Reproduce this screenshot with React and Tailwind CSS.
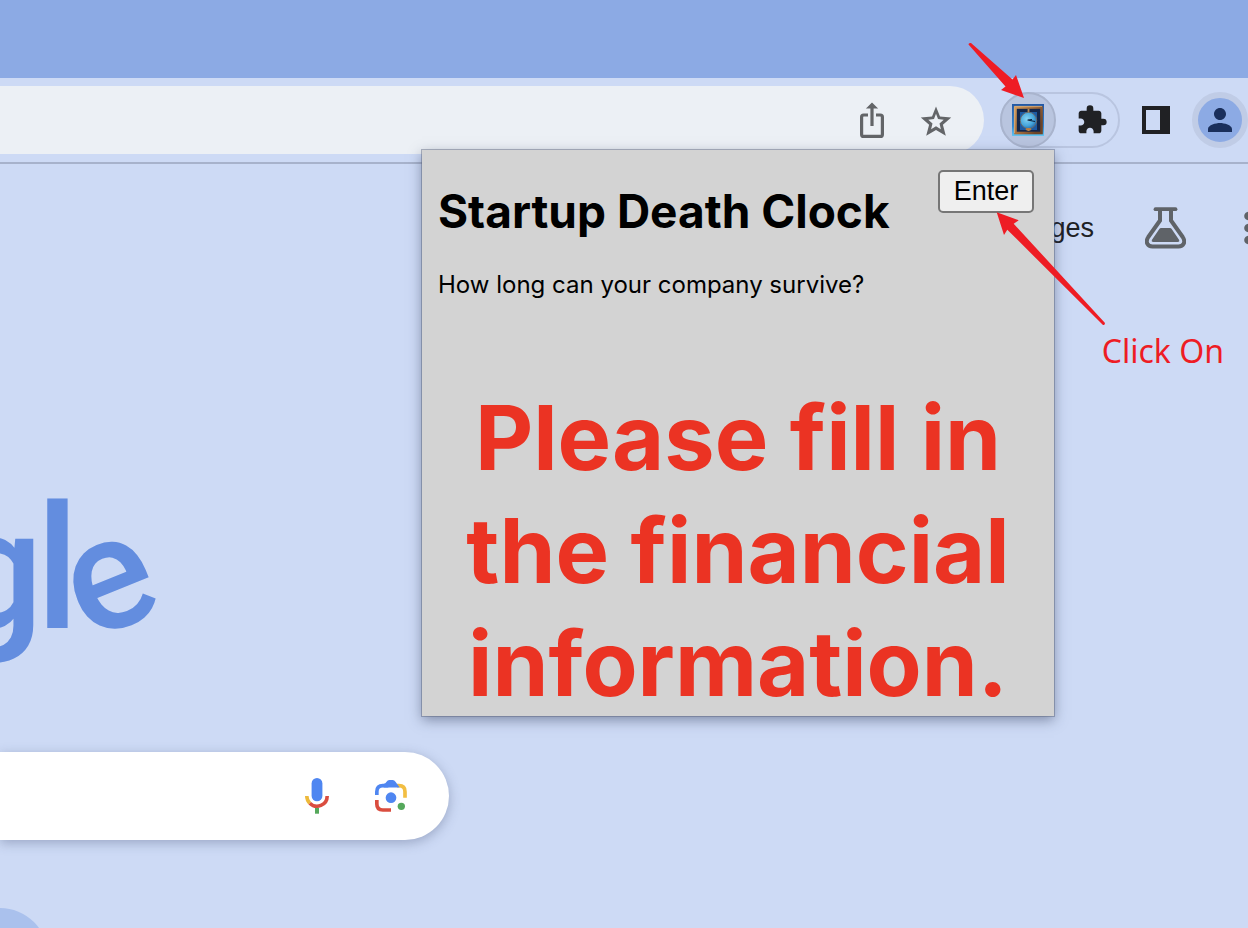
import React from "react";
import { MdExtension, MdPerson } from "react-icons/md";

function ShareIcon() {
  return (
    <svg className="h-9 w-7" viewBox="0 0 28 36" fill="none" stroke="#636568" strokeWidth="3.2" aria-hidden="true">
      <path d="M10 13H5.6a2 2 0 0 0-2 2v17.400a2 2 0 0 0 2 2h16.800a2 2 0 0 0 2-2V15a2 2 0 0 0-2-2H18" />
      <path d="M14 24V3" />
      <path d="M9.800 5.800L14 1.600l4.200 4.200z" fill="#636568" strokeWidth="1.600" />
    </svg>
  );
}

function StarIcon() {
  return (
    <svg className="size-9" viewBox="0 0 36 36" aria-hidden="true">
      <path
        d="M18 4.500L22 14.400L33.200 15.600L24.900 22.700L27.800 33.800L18 28L8.200 33.800L11.100 22.700L2.800 15.600L14 14.400Z M18 11.800L16 17L10.300 17.800L14.500 21.400L13.100 27.200L18 24.200L22.900 27.200L21.500 21.400L25.700 17.800L20 17Z"
        fill="#636568"
        fillRule="evenodd"
      />
    </svg>
  );
}

function ClockFrameIcon() {
  return (
    <svg className="size-8" viewBox="0 0 32 32" aria-hidden="true">
      <defs>
        <linearGradient id="sky" x1="0" y1="0" x2="0" y2="1">
          <stop offset="0" stopColor="#2458a4" />
          <stop offset="0.7" stopColor="#2f86d6" />
          <stop offset="1" stopColor="#63c4f0" />
        </linearGradient>
        <linearGradient id="wood" x1="0" y1="0" x2="1" y2="0.6">
          <stop offset="0" stopColor="#d29a5c" />
          <stop offset="0.5" stopColor="#a8703e" />
          <stop offset="1" stopColor="#6e4426" />
        </linearGradient>
        <radialGradient id="dial" cx="0.4" cy="0.4" r="0.7">
          <stop offset="0" stopColor="#86d3f2" />
          <stop offset="0.6" stopColor="#45a5dc" />
          <stop offset="1" stopColor="#1c5c9e" />
        </radialGradient>
      </defs>
      <rect width="32" height="32" fill="url(#sky)" />
      <rect x="3.500" y="3.500" width="26" height="25.500" fill="#14264a" stroke="url(#wood)" strokeWidth="2.600" />
      <path d="M2.400 29V2.400H30" fill="none" stroke="#e6b980" strokeWidth="0.700" />
      <rect x="8" y="8" width="17" height="18" fill="#1c5aa4" />
      <path d="M16.500 5v4M16.500 24v3" stroke="#b88a54" strokeWidth="1.800" />
      <circle cx="16.500" cy="16.500" r="8.200" fill="url(#dial)" stroke="#6f6a62" strokeWidth="0.900" />
      <path d="M15.500 16l7.500 1.500M16 16l4-0.500" stroke="#0d2340" strokeWidth="1.200" />
      <ellipse cx="16.500" cy="25.300" rx="3" ry="1.400" fill="#b47b45" />
    </svg>
  );
}

function SidePanelIcon() {
  return (
    <svg className="size-7" viewBox="0 0 28 28" aria-hidden="true">
      <path d="M0 0h28v28H0zM4 4v20h14V4z" fill="#202124" fillRule="evenodd" />
    </svg>
  );
}

function FlaskIcon() {
  return (
    <svg className="h-[42px] w-[41px]" viewBox="0 0 41 42" fill="none" aria-hidden="true">
      <path d="M10.500 2.200h20" stroke="#5f6368" strokeWidth="3.800" strokeLinecap="round" />
      <path
        d="M15 3v10.500L3.300 30C0 35 2.500 39.500 7.500 39.500h26c5 0 7.500-4.500 4.200-9.500L26 13.500V3"
        stroke="#5f6368"
        strokeWidth="4"
      />
      <path d="M16 21h9q1 0 1.500.8l7.500 11q1 2.200-1.400 2.200H8.400Q6 35 7 32.800l7.500-11Q15 21 16 21z" fill="#5f6368" />
    </svg>
  );
}

function AppsIcon() {
  return (
    <svg className="-mr-8 h-9 w-9 shrink-0" viewBox="0 0 36 36" fill="#5f6368" aria-hidden="true">
      {[6, 18, 30].map((y) =>
        [4.5, 17, 30].map((x) => <circle key={x + "-" + y} cx={x} cy={y} r="4.300" />)
      )}
    </svg>
  );
}

function MicIcon() {
  return (
    <svg className="h-9 w-6" viewBox="0 0 24 36" fill="none" aria-hidden="true">
      <rect x="6.600" y="0" width="10.800" height="23.300" rx="5.400" fill="#4f86f1" />
      <path d="M1.800 18A10.200 10.200 0 0 0 4.800 25.200" stroke="#edb93b" strokeWidth="3.600" />
      <path d="M4.800 25.200A10.200 10.200 0 0 0 22.200 18" stroke="#da4d3f" strokeWidth="3.600" />
      <path d="M12 30v5.700" stroke="#55a85b" strokeWidth="4" />
    </svg>
  );
}

function LensIcon() {
  return (
    <svg className="size-8" viewBox="0 0 96 96" fill="none" aria-hidden="true">
      <path d="M66 17h6q18 0 18 18v18" stroke="#f2be42" strokeWidth="11" />
      <path d="M5.500 45V35q0-18 18-18H40" stroke="#4f86f1" strokeWidth="11" />
      <path d="M26 12q6-2 8-6Q38 0 43 0h10q5 0 9 6l12 16.500H26z" fill="#4f86f1" />
      <path d="M5.500 60v12q0 18 18 18H48" stroke="#da4d3f" strokeWidth="11" />
      <circle cx="48" cy="53" r="16" fill="#4f86f1" />
      <circle cx="79" cy="79" r="11" fill="#55a85b" />
    </svg>
  );
}

function Arrows() {
  return (
    <svg
      className="pointer-events-none absolute top-[40px] right-[128px] h-[290px] w-[160px]"
      viewBox="960 40 160 290"
      fill="#ee1c24"
      aria-hidden="true"
    >
      <path d="M968.500 44.500Q968.500 42.500 971 43L1012.500 79.500L1016 75L1024 98L1001 90L1005.500 86.500Z" />
      <path d="M996.700 212.300L1018.700 220.300L1013.700 223.700L1105 323Q1105 325.500 1103 325L1007.300 229.700L1004 235Z" />
    </svg>
  );
}

export default function App() {
  return (
    <div className="relative flex h-screen flex-col overflow-hidden bg-[#cddaf5] font-['Liberation_Sans',Arial,sans-serif]">
      <div className="h-[78px] shrink-0 bg-[#8caae4]" />

      <header className="flex h-[86px] shrink-0 items-center border-b-2 border-[#a7b2cb]">
        <div className="flex h-[68px] flex-1 items-center justify-end gap-[30px] rounded-r-full bg-[#ecf0f5] pr-[30px]">
          <button type="button" aria-label="Share this page" className="flex w-8 justify-center">
            <ShareIcon />
          </button>
          <button type="button" aria-label="Bookmark this page">
            <StarIcon />
          </button>
        </div>
        <div className="ml-4 flex h-14 w-[120px] items-center justify-between rounded-full border-2 border-[#b9c5e0]">
          <button
            type="button"
            aria-label="Startup Death Clock"
            className="-ml-0.5 flex size-14 items-center justify-center rounded-full border-2 border-[#a9b4cd] bg-[#b9c5df]"
          >
            <ClockFrameIcon />
          </button>
          <button type="button" aria-label="Extensions" className="pr-2.5 text-[#202124]">
            <MdExtension size={32} />
          </button>
        </div>
        <button type="button" aria-label="Side panel" className="ml-[22px]">
          <SidePanelIcon />
        </button>
        <button
          type="button"
          aria-label="Profile"
          className="ml-[22px] flex size-14 items-center justify-center rounded-full border-6 border-[#c0cce6] bg-[#8caae4] text-[#1a2f5c]"
        >
          <MdPerson size={36} className="shrink-0" />
        </button>
      </header>

      <nav className="flex h-32 shrink-0 items-center justify-end">
        <a href="#images" className="text-[27px] text-[#202124]">Images</a>
        <button type="button" aria-label="Search labs" className="ml-[51px]">
          <FlaskIcon />
        </button>
        <button type="button" aria-label="Apps" className="ml-[58px] flex">
          <AppsIcon />
        </button>
      </nav>

      <main className="flex flex-1 flex-col">
        <div className="flex h-[460px] w-[157px] shrink-0 items-end justify-end pb-[78px]">
          <div className="flex items-baseline font-['Roboto',sans-serif] leading-[200px] font-medium whitespace-nowrap text-[#638ddf]">
            <span className="-mr-2 text-[168px]">Goog</span>
            <span className="text-[172px]">l</span>
            <span className="-ml-2 origin-[50%_59%] -rotate-[22deg] text-[160px]">e</span>
          </div>
        </div>
        <form className="flex h-[88px] w-[36%] shrink-0 items-center justify-end gap-[46px] rounded-r-full bg-white pr-[42px] shadow-[0_3px_12px_rgba(60,72,110,0.35)]">
          <input aria-label="Search" className="min-w-0 flex-1 bg-transparent outline-none" />
          <button type="button" aria-label="Search by voice">
            <MicIcon />
          </button>
          <button type="button" aria-label="Search by image">
            <LensIcon />
          </button>
        </form>
        <a href="#shortcut" aria-label="Shortcut" className="mt-[68px] -ml-12 size-24 shrink-0 rounded-full bg-[#aac1ed]" />
      </main>

      <section className="absolute top-[150px] right-[194px] h-[566px] w-[632px] bg-[#d3d3d3] px-4 pt-5 font-['Inter',sans-serif] text-black shadow-[0_0_0_1px_rgba(90,100,125,0.45),0_4px_12px_rgba(50,60,90,0.5)]">
        <div className="flex items-start justify-between pr-1">
          <h1 className="pt-[11px] text-[46px] leading-[60px] font-bold whitespace-nowrap">Startup Death Clock</h1>
          <button
            type="button"
            className="h-[43px] w-24 rounded-[5px] border-2 border-[#767676] bg-[#efefef] font-['Liberation_Sans',Arial,sans-serif] text-[27px] leading-[39px]"
          >
            Enter
          </button>
        </div>
        <p className="mt-7 text-2xl leading-[32px]">How long can your company survive?</p>
        <p className="mt-20 text-center text-[90px] leading-[113px] font-bold text-[#eb3323]">
          Please fill in the financial information.
        </p>
      </section>

      <p className="absolute top-[330px] right-[24px] font-['Noto_Sans',sans-serif] text-[32px] leading-[42px] text-[#ee1c24]">
        Click On
      </p>
      <Arrows />
    </div>
  );
}
